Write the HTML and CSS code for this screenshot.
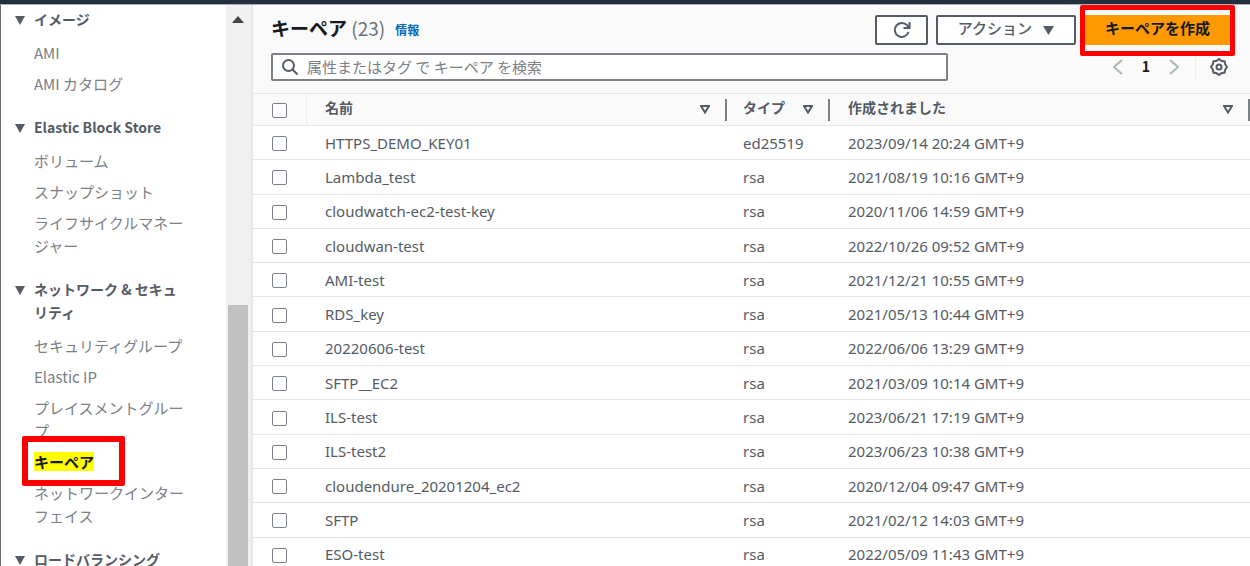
FILE: index.html
```
<!DOCTYPE html>
<html lang="ja">
   <head>
      <title>キーペア | EC2</title>
      <meta charset="UTF-8">
      <meta name="viewport" content="width=device-width, initial-scale=1.0">
      <link rel="stylesheet" href="styles.css">
   </head>
   <body>
      <header class="topbar"></header>
      <div class="page">
         <nav class="sidebar">
            <div class="menu">
               <h2>イメージ</h2>
               <ul>
                  <li><a href="#">AMI</a></li>
                  <li><a href="#">AMI カタログ</a></li>
               </ul>
               <h2>Elastic Block Store</h2>
               <ul>
                  <li><a href="#">ボリューム</a></li>
                  <li><a href="#">スナップショット</a></li>
                  <li><a href="#">ライフサイクルマネージャー</a></li>
               </ul>
               <h2>ネットワーク &amp; セキュリティ</h2>
               <ul>
                  <li><a href="#">セキュリティグループ</a></li>
                  <li><a href="#">Elastic IP</a></li>
                  <li><a href="#">プレイスメントグループ</a></li>
                  <li class="marked"><a href="#" class="active">キーペア</a></li>
                  <li><a href="#">ネットワークインターフェイス</a></li>
               </ul>
               <h2>ロードバランシング</h2>
            </div>
            <div class="scrollbar">
               <svg class="arrow" viewBox="0 0 12 7"><path d="M0 7 6 0l6 7z"/></svg>
               <div class="thumb"></div>
            </div>
         </nav>
         <main>
            <div class="title">
               <h1>キーペア <span>(23)</span></h1>
               <a href="#" class="info">情報</a>
               <div class="buttons">
                  <button class="refresh" aria-label="更新">
                     <svg viewBox="0 0 18 18"><path d="M15.500 11A7 7 0 1 1 14 4.200L16 6.500"/><path d="M16.500 1v6h-6"/></svg>
                  </button>
                  <button class="actions">アクション <svg viewBox="0 0 11 9"><path d="M0 0h11L5.500 9z"/></svg></button>
                  <div class="marked-create"><button class="create">キーペアを作成</button></div>
               </div>
            </div>
            <div class="tools">
               <label class="search">
                  <svg viewBox="0 0 16 16"><circle cx="6.500" cy="6.500" r="5.500"/><path d="m10.500 10.500 5 5"/></svg>
                  <input type="text" placeholder="属性またはタグ で キーペア を検索" aria-label="キーペア を検索">
               </label>
               <div class="pages">
                  <button aria-label="前へ"><svg class="chevron" viewBox="0 0 10 16"><path d="M9 1 1 8l8 7"/></svg></button>
                  <button class="number">1</button>
                  <button aria-label="次へ"><svg class="chevron" viewBox="0 0 10 16"><path d="m1 1 8 7-8 7"/></svg></button>
                  <button class="settings" aria-label="設定">
                     <svg viewBox="0 0 18 18"><path d="M9 1 11.300 2.700 14.600 3.400 15.300 6.700 17 9 15.300 11.300 14.600 14.600 11.300 15.300 9 17 6.700 15.300 3.400 14.600 2.700 11.300 1 9 2.700 6.700 3.400 3.400 6.700 2.700z"/><circle cx="9" cy="9" r="2.500"/></svg>
                  </button>
               </div>
            </div>
            <table>
               <thead>
                  <tr>
                     <th class="check"><input type="checkbox" aria-label="すべて選択"></th>
                     <th><div><span>名前</span> <svg viewBox="0 0 10 9"><path d="M1 1h8L5 7.500z"/></svg></div></th>
                     <th class="type"><div><span>タイプ</span> <svg viewBox="0 0 10 9"><path d="M1 1h8L5 7.500z"/></svg></div></th>
                     <th><div><span>作成されました</span> <svg viewBox="0 0 10 9"><path d="M1 1h8L5 7.500z"/></svg></div></th>
                  </tr>
               </thead>
               <tbody>
                  <tr><td><input type="checkbox" aria-label="HTTPS_DEMO_KEY01"></td><td>HTTPS_DEMO_KEY01</td><td>ed25519</td><td>2023/09/14 20:24 GMT+9</td></tr>
                  <tr><td><input type="checkbox" aria-label="Lambda_test"></td><td>Lambda_test</td><td>rsa</td><td>2021/08/19 10:16 GMT+9</td></tr>
                  <tr><td><input type="checkbox" aria-label="cloudwatch-ec2-test-key"></td><td>cloudwatch-ec2-test-key</td><td>rsa</td><td>2020/11/06 14:59 GMT+9</td></tr>
                  <tr><td><input type="checkbox" aria-label="cloudwan-test"></td><td>cloudwan-test</td><td>rsa</td><td>2022/10/26 09:52 GMT+9</td></tr>
                  <tr><td><input type="checkbox" aria-label="AMI-test"></td><td>AMI-test</td><td>rsa</td><td>2021/12/21 10:55 GMT+9</td></tr>
                  <tr><td><input type="checkbox" aria-label="RDS_key"></td><td>RDS_key</td><td>rsa</td><td>2021/05/13 10:44 GMT+9</td></tr>
                  <tr><td><input type="checkbox" aria-label="20220606-test"></td><td>20220606-test</td><td>rsa</td><td>2022/06/06 13:29 GMT+9</td></tr>
                  <tr><td><input type="checkbox" aria-label="SFTP__EC2"></td><td>SFTP__EC2</td><td>rsa</td><td>2021/03/09 10:14 GMT+9</td></tr>
                  <tr><td><input type="checkbox" aria-label="ILS-test"></td><td>ILS-test</td><td>rsa</td><td>2023/06/21 17:19 GMT+9</td></tr>
                  <tr><td><input type="checkbox" aria-label="ILS-test2"></td><td>ILS-test2</td><td>rsa</td><td>2023/06/23 10:38 GMT+9</td></tr>
                  <tr><td><input type="checkbox" aria-label="cloudendure_20201204_ec2"></td><td>cloudendure_20201204_ec2</td><td>rsa</td><td>2020/12/04 09:47 GMT+9</td></tr>
                  <tr><td><input type="checkbox" aria-label="SFTP"></td><td>SFTP</td><td>rsa</td><td>2021/02/12 14:03 GMT+9</td></tr>
                  <tr><td><input type="checkbox" aria-label="ESO-test"></td><td>ESO-test</td><td>rsa</td><td>2022/05/09 11:43 GMT+9</td></tr>
               </tbody>
            </table>
         </main>
      </div>
   </body>
</html>
```
FILE: styles.css
```
*, *::before, *::after
{ box-sizing:border-box;}
body
{ margin:0;
  height:100vh;
  display:flex;
  flex-direction:column;
  overflow:hidden;
  color:#545b64;
  background-color:white;
  font:15px/23px "Noto Sans CJK JP", sans-serif;}
button, input
{ font:inherit;
  color:inherit;
  margin:0;}
a
{ color:inherit;
  text-decoration:none;}
svg
{ display:block;
  fill:none;
  stroke:#545b64;
  stroke-width:2;}
.topbar
{ height:4px;
  flex:none;
  background-color:#232f3e;}
.page
{ flex:1;
  min-height:0;
  display:flex;
  border-top:1px solid #aab0b5;}

/* side menu */
.sidebar
{ display:flex;
  flex:none;
  width:253px;
  border-left:1px solid #6b6b6b;
  border-right:2px solid #e4e8e8;}
.menu
{ flex:1;
  padding:3px 36px 0 33px;}
.menu h2
{ margin:0 0 10px;
  font-size:14px;
  line-height:23px;
  position:relative;}
.menu h2::before
{ content:"";
  position:absolute;
  left:-19px;
  top:8px;
  border:5px solid transparent;
  border-top:9px solid #545b64;
  border-bottom:0;}
.menu ul
{ list-style:none;
  margin:0 0 21px;
  padding:0;
  display:flex;
  flex-direction:column;
  gap:8px;
  color:#7b8085;}
.menu .active
{ display:inline-block;
  color:#16191f;
  font-weight:bold;
  line-height:19px;
  background-color:yellow;}
.marked
{ position:relative;}
.marked::after
{ content:"";
  position:absolute;
  left:-12px;
  top:-14px;
  width:103px;
  height:50px;
  border:6px solid red;
  border-radius:2px;
  pointer-events:none;}
.scrollbar
{ width:25px;
  padding:11px 3px 0 2px;
  display:flex;
  flex-direction:column;
  align-items:center;
  background-color:#f0f0f0;}
.scrollbar .arrow
{ width:12px;
  height:7px;
  flex:none;
  fill:#444;
  stroke:none;}
.thumb
{ margin-top:282px;
  flex:1;
  width:100%;
  background-color:#c1c1c1;}

/* key pair list */
main
{ flex:1;
  min-width:0;
  background-color:#fafafa;}
.title
{ display:flex;
  align-items:center;
  height:48px;
  padding:2px 19px 0 18px;}
h1
{ margin:0;
  padding-bottom:4px;
  color:#16191f;
  font-size:19px;
  line-height:28px;}
h1 span
{ color:#687078;
  font-weight:normal;}
.info
{ margin-left:10px;
  padding-bottom:2px;
  color:#0b67b8;
  font-size:12px;
  font-weight:bold;}
.buttons
{ display:flex;
  gap:8px;
  margin-left:auto;}
.buttons button
{ height:30px;
  padding:0 0 4px;
  border:2px solid #545b64;
  border-radius:2px;
  background-color:white;
  font-weight:bold;
  line-height:22px;
  display:flex;
  align-items:center;
  justify-content:center;}
.buttons .refresh
{ width:53px;
  padding:0;}
.refresh svg
{ width:18px;
  height:18px;
  flex:none;}
.buttons .actions
{ width:140px;
  gap:11px;
  font-weight:500;}
.actions svg
{ width:11px;
  height:9px;
  margin-top:4px;
  fill:#545b64;
  stroke:none;}
.marked-create
{ position:relative;}
.marked-create::after
{ content:"";
  position:absolute;
  inset:-10px -4px -11px;
  border:5px solid red;
  border-radius:2px;
  pointer-events:none;}
.buttons .create
{ width:147px;
  border-color:#ff9900;
  background-color:#ff9900;
  color:#16191f;}
.tools
{ display:flex;
  align-items:center;
  height:40px;
  padding:0 22px 12px 18px;}
.search
{ flex:1;
  height:28px;
  margin-right:165px;
  display:flex;
  align-items:center;
  gap:9px;
  padding:0 9px;
  border:2px solid #7b8187;
  border-radius:2px;
  background-color:white;}
.search svg
{ width:16px;
  height:16px;}
.search input
{ flex:1;
  min-width:0;
  height:24px;
  padding:0 0 2px;
  border:none;
  outline:none;
  background:none;}
.search input::placeholder
{ color:#7b8085;
  opacity:1;}
.pages
{ display:flex;
  align-items:center;
  gap:19px;}
.pages button
{ padding:0;
  border:none;
  background:none;}
.pages .number
{ color:#16191f;
  font-size:14px;
  font-weight:bold;
  padding-bottom:2px;}
.pages .settings
{ height:28px;
  padding-left:14px;
  margin-left:-3px;
  border-left:1px solid #eaeded;}
.settings svg
{ width:18px;
  height:18px;}
.chevron
{ width:10px;
  height:16px;}
.pages .chevron
{ stroke:#aab7b8;}
table
{ width:100%;
  height:479px;
  table-layout:fixed;
  border-collapse:separate;
  border-spacing:0;
  font-family:"Noto Sans", "Noto Sans CJK JP", sans-serif;
  background-color:white;}
th, td
{ padding:0 0 0 18px;
  text-align:left;
  border-bottom:1px solid #e4e8e8;
  line-height:20px;}
th
{ height:33px;
  font-size:14px;
  background-color:#fafafa;
  border-top:1px solid #e4e8e8;}
.check
{ width:54px;
  border-right:1px solid #eaeded;}
.type
{ width:103px;}
.type, td:nth-child(3)
{ padding-left:16px;}
th div
{ height:22px;
  display:flex;
  align-items:center;
  justify-content:space-between;
  padding-right:15px;
  border-right:2px solid #7b8187;}
th span
{ padding-bottom:4px;}
th svg
{ width:10px;
  height:9px;}
td:nth-child(1), .check
{ padding-left:19px;
  padding-top:2px;}
input[type=checkbox]
{ appearance:none;
  display:block;
  width:15px;
  height:15px;
  border:1px solid #7b8187;
  border-radius:2px;
  background-color:white;}
```
